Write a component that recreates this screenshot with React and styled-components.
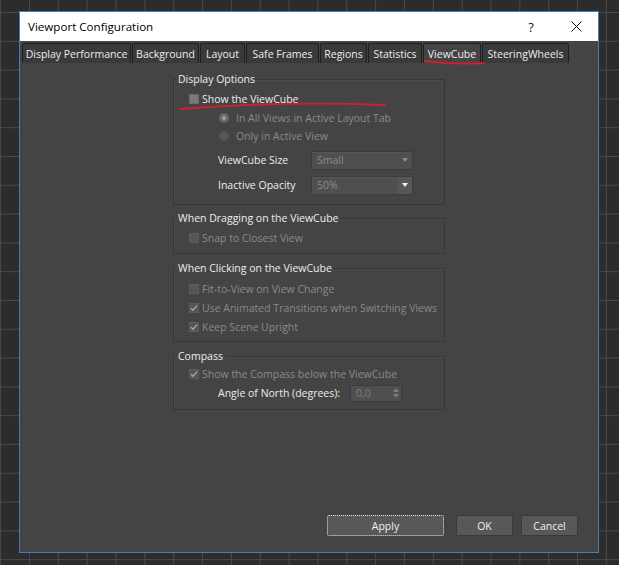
import React from 'react'
import styled, {createGlobalStyle} from 'styled-components'

const GlobalStyle = createGlobalStyle`
  html, body {
    margin: 0;
    padding: 0;
  }
  body {
    width: 619px;
    height: 565px;
    overflow: hidden;
    background-color: #2c2c2c;
    background-image:
      linear-gradient(to right, #4a4a4a 1px, transparent 1px),
      linear-gradient(to bottom, #4a4a4a 1px, transparent 1px);
    background-size: 28.85px 28.8px;
    background-position: 0.15px 12px;
    font-family: "Segoe UI", "Open Sans", "Noto Sans", sans-serif;
  }
`;

const Desktop = styled.div`
  position: relative;
  width: 619px;
  height: 565px;
  padding: 11px 0 0 19px;
  box-sizing: border-box;
`;

const Window = styled.div`
  width: 580px;
  height: 542px;
  box-sizing: border-box;
  border: 1px solid #3d7fc0;
  background: #444444;
  display: flex;
  flex-direction: column;
`;

const TitleBar = styled.div`
  height: 29px;
  background: #ffffff;
  display: flex;
  align-items: center;
  padding-left: 8px;
  color: #000;
  font-size: 11.6px;
`;

const TitleText = styled.span`
  flex: 1;
`;

const TitleButton = styled.div`
  width: ${p => p.w}px;
  height: 29px;
  display: flex;
  align-items: center;
  justify-content: center;
  font-size: 13px;
  color: #111;
`;

const TabBar = styled.div`
  height: 22px;
  box-sizing: border-box;
  padding: 2px 0 0 2px;
  display: flex;
  gap: 1px;
`;

const Tab = styled.div`
  width: ${p => p.w}px;
  height: 20px;
  box-sizing: border-box;
  border: 1px solid #1e1e1e;
  border-bottom: none;
  border-radius: 2px 2px 0 0;
  background: ${p => (p.active ? '#444444' : '#3a3a3a')};
  color: #ececec;
  font-size: 10.5px;
  display: flex;
  align-items: center;
  justify-content: center;
  white-space: nowrap;
`;

const Content = styled.div`
  flex: 1;
  display: flex;
  flex-direction: column;
  align-items: center;
  padding-top: 9px;
`;

const Group = styled.fieldset`
  width: 272px;
  box-sizing: border-box;
  margin: ${p => p.mt || 0}px 0 0;
  padding: ${p => p.pt}px 0 ${p => p.pb}px;
  border: 1px solid #363636;
  box-shadow: inset 1px 1px 0 #4c4c4c;
  min-width: 0;
`;

const Legend = styled.legend`
  margin-left: 2px;
  padding: 0 2px;
  line-height: 15px;
  font-size: 10.5px;
  color: #ececec;
`;

const Row = styled.div`
  height: ${p => p.h || 19}px;
  margin-top: ${p => p.mt || 0}px;
  display: flex;
  align-items: center;
  padding-left: ${p => p.indent}px;
  font-size: 10.5px;
  color: ${p => (p.disabled ? '#8a8a8a' : '#ececec')};
  white-space: nowrap;
`;

const Box = styled.span`
  width: 10px;
  height: 10px;
  box-sizing: border-box;
  margin-right: 3px;
  background: ${p => (p.disabled ? '#555555' : '#7a7a7a')};
  border: 1px solid ${p => (p.disabled ? '#5d5d5d' : '#6a6a6a')};
  display: flex;
  align-items: center;
  justify-content: center;
`;

const Radio = styled.span`
  width: 10px;
  height: 10px;
  border-radius: 50%;
  margin-right: 7px;
  background: ${p => (p.on ? '#686868' : '#555555')};
  display: flex;
  align-items: center;
  justify-content: center;

  &::after {
    content: '';
    display: ${p => (p.on ? 'block' : 'none')};
    width: 4px;
    height: 4px;
    border-radius: 50%;
    background: #a0a0a0;
  }
`;

const Label = styled.span`
  width: ${p => p.w}px;
  color: #ececec;
`;

const Select = styled.div`
  width: 102px;
  height: 19px;
  box-sizing: border-box;
  border: 1px solid #3c3c3c;
  background: #4f4f4f;
  box-shadow: inset 0 1px 0 #565656;
  display: flex;
  align-items: center;
  color: #8a8a8a;
  font-size: 10.5px;
`;

const SelectText = styled.span`
  flex: 1;
  padding-left: 5px;
`;

const SelectArrow = styled.span`
  width: 14px;
  height: 100%;
  display: flex;
  align-items: center;
  justify-content: center;
  background: ${p => (p.active ? '#575757' : 'transparent')};
`;

const Spinner = styled.div`
  width: 52px;
  height: 17px;
  box-sizing: border-box;
  border: 1px solid #3c3c3c;
  background: #4f4f4f;
  display: flex;
  align-items: center;
  color: #7c7c7c;
  font-size: 10.5px;
`;

const SpinArrows = styled.span`
  width: 10px;
  display: flex;
  flex-direction: column;
  align-items: center;
  gap: 2px;
`;

const Footer = styled.div`
  display: flex;
  justify-content: flex-end;
  padding: 0 20px 16px 0;
`;

const Button = styled.div`
  width: ${p => p.w}px;
  height: 21px;
  box-sizing: border-box;
  margin-left: ${p => p.ml || 0}px;
  background: #585858;
  border: 1px ${p => (p.focus ? 'dotted #e0e0e0' : 'solid #3a3a3a')};
  border-radius: 2px;
  color: #f0f0f0;
  font-size: 10.5px;
  display: flex;
  align-items: center;
  justify-content: center;
`;

const Scribble = styled.svg`
  position: absolute;
  left: 0;
  top: 0;
  pointer-events: none;
`;

const Check = ({checked, disabled}) => (
  <Box disabled={disabled}>
    {checked && (
      <svg width="8" height="8" viewBox="0 0 8 8">
        <path d="M1 4.2 L3.1 6.2 L7 1.6" fill="none" stroke="#a8a8a8" strokeWidth="1.4" />
      </svg>
    )}
  </Box>
);

const Tri = ({color, up}) => (
  <svg width="6" height="4" viewBox="0 0 6 4">
    <path d={up ? 'M0 4 L3 0 L6 4 Z' : 'M0 0 L6 0 L3 4 Z'} fill={color} />
  </svg>
);

const tabs = [
  ['Display Performance', 109],
  ['Background', 67],
  ['Layout', 45],
  ['Safe Frames', 73],
  ['Regions', 47],
  ['Statistics', 54],
  ['ViewCube', 58],
  ['SteeringWheels', 87],
];

export default function App() {
  return (
    <Desktop>
      <GlobalStyle />
      <Window>
        <TitleBar>
          <TitleText>Viewport Configuration</TitleText>
          <TitleButton w={46}>?</TitleButton>
          <TitleButton w={44}>
            <svg width="11" height="11" viewBox="0 0 11 11">
              <path d="M0.5 0.5 L10.5 10.5 M10.5 0.5 L0.5 10.5" stroke="#111" strokeWidth="1" />
            </svg>
          </TitleButton>
        </TitleBar>
        <TabBar>
          {tabs.map(([name, w]) => (
            <Tab key={name} w={w} active={name === 'ViewCube'}>{name}</Tab>
          ))}
        </TabBar>
        <Content>
          <Group pt={3} pb={9}>
            <Legend>Display Options</Legend>
            <Row indent={15} h={18.5}><Check />Show the ViewCube</Row>
            <Row indent={45} h={18.5} disabled><Radio on />In All Views in Active Layout Tab</Row>
            <Row indent={45} h={18.5} disabled><Radio />Only in Active View</Row>
            <Row indent={44} h={20} mt={4.5}>
              <Label w={93}>ViewCube Size</Label>
              <Select>
                <SelectText>Small</SelectText>
                <SelectArrow><Tri color="#8a8a8a" /></SelectArrow>
              </Select>
            </Row>
            <Row indent={44} h={20} mt={5}>
              <Label w={93}>Inactive Opacity</Label>
              <Select>
                <SelectText>50%</SelectText>
                <SelectArrow active><Tri color="#f2f2f2" /></SelectArrow>
              </Select>
            </Row>
          </Group>
          <Group mt={6} pt={3} pb={5}>
            <Legend>When Dragging on the ViewCube</Legend>
            <Row indent={15} h={18.5} disabled><Check disabled />Snap to Closest View</Row>
          </Group>
          <Group mt={7} pt={3.5} pb={4.5}>
            <Legend>When Clicking on the ViewCube</Legend>
            <Row indent={15} disabled><Check disabled />Fit-to-View on View Change</Row>
            <Row indent={15} disabled><Check disabled checked />Use Animated Transitions when Switching Views</Row>
            <Row indent={15} disabled><Check disabled checked />Keep Scene Upright</Row>
          </Group>
          <Group mt={7} pt={1.5} pb={6}>
            <Legend>Compass</Legend>
            <Row indent={15} h={18} disabled><Check disabled checked />Show the Compass below the ViewCube</Row>
            <Row indent={44} h={20}>
              <Label w={132}>Angle of North (degrees):</Label>
              <Spinner>
                <SelectText>0,0</SelectText>
                <SpinArrows>
                  <Tri color="#7c7c7c" up />
                  <Tri color="#7c7c7c" />
                </SpinArrows>
              </Spinner>
            </Row>
          </Group>
        </Content>
        <Footer>
          <Button w={117} focus>Apply</Button>
          <Button w={57} ml={12}>OK</Button>
          <Button w={57} ml={8}>Cancel</Button>
        </Footer>
      </Window>
      <Scribble width="619" height="565" viewBox="0 0 619 565">
        <path d="M180 109 Q 280 101 385 105" fill="none" stroke="#d21f2b" strokeWidth="1.8" strokeLinecap="round" />
        <path d="M425 61 Q 455 65 484 63" fill="none" stroke="#d21f2b" strokeWidth="1.8" strokeLinecap="round" />
      </Scribble>
    </Desktop>
  );
}
